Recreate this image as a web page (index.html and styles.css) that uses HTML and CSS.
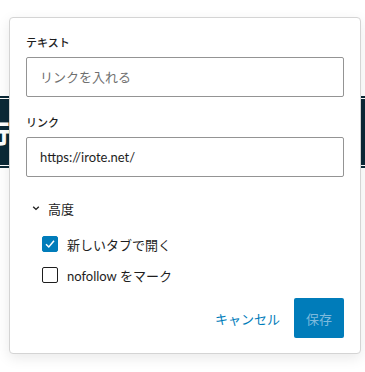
FILE: index.html
```html
<!DOCTYPE HTML>
<html lang="ja">
<head>
	<meta charset="UTF-8">
	<title>リンク設定</title>
	<link rel="stylesheet" href="styles.css">
</head>
<body>
	<div class="band">
		<div class="band-inner"><span class="band-title">行</span></div>
	</div>

	<div class="popover">
		<div class="field">
			<label class="field-label" for="link-text">テキスト</label>
			<input class="field-input" type="text" id="link-text" placeholder="リンクを入れる">
		</div>
		<div class="field">
			<label class="field-label" for="link-url">リンク</label>
			<input class="field-input" type="text" id="link-url" value="https://irote.net/">
		</div>
		<button class="toggle" type="button">
			<svg class="chevron" width="22" height="24" viewBox="0 0 22 24"><path d="M7.2 10.8 L10 13.4 L12.8 10.8" fill="none" stroke="#1e1e1e" stroke-width="1.4"/></svg>
			高度
		</button>
		<div class="options">
			<label class="option">
				<span class="check is-checked"><svg width="14" height="14" viewBox="0 0 14 14"><path d="M3 7.2 L5.8 10 L11 3.8" fill="none" stroke="#fff" stroke-width="1.5"/></svg></span>
				新しいタブで開く
			</label>
			<label class="option">
				<span class="check"></span>
				nofollow をマーク
			</label>
		</div>
		<div class="actions">
			<button class="btn-link" type="button">キャンセル</button>
			<button class="btn-primary" type="button">保存</button>
		</div>
	</div>
</body>
</html>
```

FILE: styles.css
```css
body{
	margin: 0;
	padding: 0;
	background-color: #fff;
	font-family: "Lato", "Noto Sans CJK JP", sans-serif;
	color: #1e1e1e;
}
.band{
	margin-top: 96px;
	padding: 1px 0;
	border-top: 2px solid #0b2937;
	border-bottom: 2px solid #0b2937;
}
.band-inner{
	height: 66px;
	background-color: #0b2937;
	display: flex;
	align-items: center;
	overflow: hidden;
}
.band-title{
	margin-left: -15px;
	color: #fff;
	font-family: "Noto Sans CJK JP", sans-serif;
	font-weight: 900;
	font-size: 25px;
}
.popover{
	position: absolute;
	left: 9px;
	top: 17px;
	width: 352px;
	box-sizing: border-box;
	padding: 16px 16px 15px;
	background-color: #fff;
	border: 1px solid #d4d4d4;
	border-radius: 4px;
	box-shadow: 0 4px 14px rgba(0,0,0,0.09);
}
.field{
	margin-bottom: 17px;
}
.field-label{
	display: block;
	font-family: "Noto Sans CJK JP", sans-serif;
	font-size: 11px;
	font-weight: 500;
	line-height: 16px;
	margin-bottom: 7px;
}
.field-input{
	display: block;
	width: 100%;
	height: 40px;
	box-sizing: border-box;
	padding: 0 13px;
	border: 1px solid #949494;
	border-radius: 2px;
	font-family: inherit;
	font-size: 13px;
	color: #1e1e1e;
	background: #fff;
}
.field-input::placeholder{
	color: #6f6f6f;
}
.toggle{
	display: flex;
	align-items: center;
	height: 28px;
	padding: 0;
	border: none;
	background: none;
	font-family: inherit;
	font-size: 13px;
	color: #1e1e1e;
}
.options{
	margin-top: 10px;
	padding-left: 16px;
	display: flex;
	flex-direction: column;
	gap: 7px;
}
.option{
	display: flex;
	align-items: center;
	gap: 9px;
	height: 24px;
	font-size: 13px;
}
.check{
	width: 16px;
	height: 16px;
	box-sizing: border-box;
	border: 1px solid #1e1e1e;
	border-radius: 2px;
	display: flex;
	align-items: center;
	justify-content: center;
}
.check.is-checked{
	background-color: #007cba;
	border-color: #007cba;
}
.actions{
	margin-top: 11px;
	display: flex;
	justify-content: flex-end;
	align-items: center;
	gap: 6px;
}
.btn-link{
	height: 40px;
	padding: 0 8px;
	border: none;
	background: none;
	font-family: inherit;
	font-size: 13px;
	color: #007cba;
}
.btn-primary{
	height: 40px;
	padding: 0 12px;
	border: none;
	border-radius: 2px;
	background-color: #007cba;
	font-family: inherit;
	font-size: 13px;
	color: #7dbadd;
}
```
